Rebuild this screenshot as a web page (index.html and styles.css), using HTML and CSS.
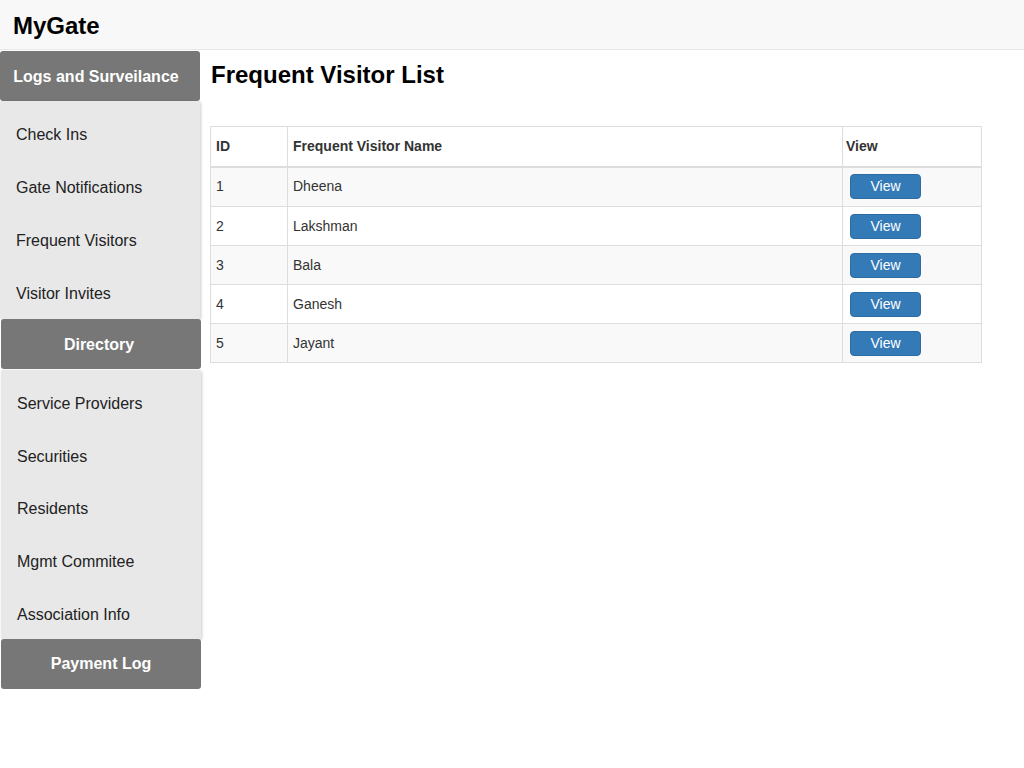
FILE: index.html
```html
<!DOCTYPE html>
<html lang="en">
<head>
<meta charset="utf-8">
<title>MyGate</title>
<link rel="stylesheet" href="styles.css">
</head>
<body>
<header class="topbar">
  <span class="brand">MyGate</span>
</header>
<div class="layout">
  <nav class="sidebar">
    <div class="section-btn first">Logs and Surveilance</div>
    <div class="panel panel-one">
      <div class="item">Check Ins</div>
      <div class="item">Gate Notifications</div>
      <div class="item">Frequent Visitors</div>
      <div class="item">Visitor Invites</div>
    </div>
    <div class="section-btn shifted dir">Directory</div>
    <div class="panel panel-two shifted">
      <div class="item">Service Providers</div>
      <div class="item">Securities</div>
      <div class="item">Residents</div>
      <div class="item">Mgmt Commitee</div>
      <div class="item">Association Info</div>
    </div>
    <div class="section-btn shifted">Payment Log</div>
  </nav>
  <main class="content">
    <h2 class="title">Frequent Visitor List</h2>
    <table class="visitors">
      <thead>
        <tr>
          <th class="col-id">ID</th>
          <th class="col-name">Frequent Visitor Name</th>
          <th class="col-view">View</th>
        </tr>
      </thead>
      <tbody>
        <tr class="odd first-row"><td>1</td><td>Dheena</td><td><button class="view-btn">View</button></td></tr>
        <tr><td>2</td><td>Lakshman</td><td><button class="view-btn">View</button></td></tr>
        <tr class="odd"><td>3</td><td>Bala</td><td><button class="view-btn">View</button></td></tr>
        <tr><td>4</td><td>Ganesh</td><td><button class="view-btn">View</button></td></tr>
        <tr class="odd"><td>5</td><td>Jayant</td><td><button class="view-btn">View</button></td></tr>
      </tbody>
    </table>
  </main>
</div>
</body>
</html>
```

FILE: styles.css
```css
* { box-sizing: border-box; }

body {
  margin: 0;
  font-family: "Liberation Sans", Arial, sans-serif;
  color: #222;
  background: #fff;
}

.topbar {
  height: 50px;
  background: #f8f8f8;
  border-bottom: 1px solid #e7e7e7;
  display: flex;
  align-items: center;
  padding-left: 13px;
}

.brand {
  font-size: 24px;
  font-weight: bold;
  color: #000;
  line-height: 28px;
  margin-top: 2px;
}

.layout {
  display: flex;
  align-items: flex-start;
}

.sidebar {
  width: 202px;
  flex: none;
  margin-top: 1px;
  display: flex;
  flex-direction: column;
}

.section-btn {
  width: 200px;
  height: 50px;
  background: #777777;
  color: #fff;
  font-size: 16px;
  font-weight: bold;
  border-radius: 3px;
  display: flex;
  align-items: center;
  justify-content: center;
}

.section-btn.first {
  padding-right: 8px;
  padding-top: 2px;
}

.section-btn.dir {
  padding-right: 4px;
  padding-top: 2px;
}

.shifted {
  margin-left: 1px;
}

.panel {
  width: 200px;
  background: #e8e8e8;
  border-radius: 2px;
  box-shadow: 1px 1px 3px rgba(0, 0, 0, 0.2);
  display: flex;
  flex-direction: column;
}

.panel-one {
  padding-top: 6px;
}

.panel-one .item {
  height: 53px;
  padding-top: 2px;
}

.panel-two {
  margin-top: 1px;
  padding-top: 5px;
}

.panel-two .item {
  height: 52.75px;
  padding-top: 5px;
}

.item {
  display: flex;
  align-items: center;
  padding-left: 16px;
  font-size: 16px;
  color: #222;
}

.content {
  flex: 1;
  padding-left: 8px;
}

.title {
  margin: 11px 0 0 1px;
  font-size: 24px;
  line-height: 28px;
  font-weight: bold;
  color: #000;
}

.visitors {
  margin-top: 37px;
  width: 772px;
  table-layout: fixed;
  border-collapse: separate;
  border-spacing: 0;
  border-top: 1px solid #ddd;
  border-left: 1px solid #ddd;
  font-size: 14px;
  color: #333;
}

.visitors th,
.visitors td {
  padding: 0 5px;
  text-align: left;
  vertical-align: middle;
  border-right: 1px solid #ddd;
}

.visitors th {
  height: 41px;
  font-weight: bold;
  border-bottom: 2px solid #ddd;
  padding-bottom: 2px;
}

.visitors td {
  height: 39px;
  border-bottom: 1px solid #ddd;
}

.visitors tr.first-row td {
  padding-bottom: 2px;
}

.col-id { width: 77px; }
.col-name { width: 555px; }
.col-view { width: 139px; padding-left: 3px !important; }

.visitors td:last-child {
  padding-left: 7px;
}

.visitors tr.odd td {
  background: #f9f9f9;
}

.view-btn {
  width: 71px;
  height: 25px;
  background: #337ab7;
  border: 1px solid #2e6da4;
  border-radius: 4px;
  color: #fff;
  font-family: "Liberation Sans", Arial, sans-serif;
  font-size: 14px;
  padding: 0;
  display: block;
}
```
